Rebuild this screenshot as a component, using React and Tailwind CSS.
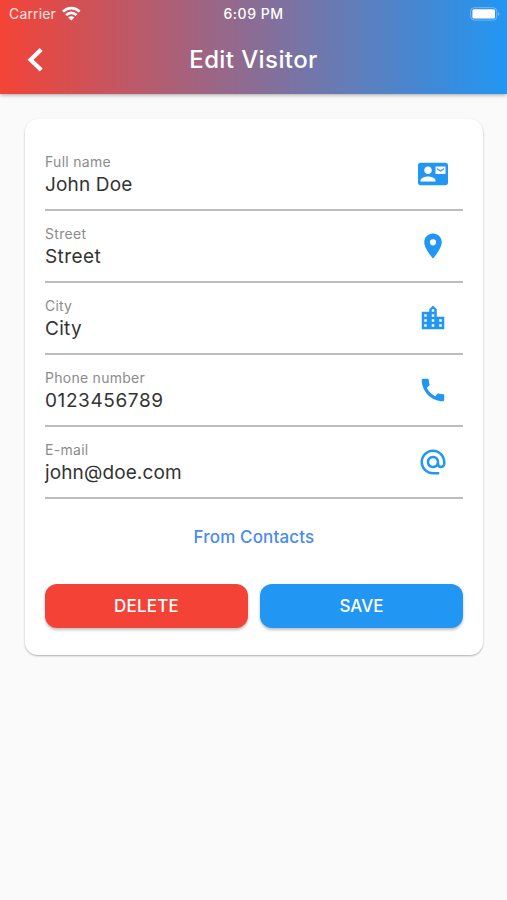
import React from 'react';
import { MdAlternateEmail, MdCall, MdLocationCity, MdLocationOn } from 'react-icons/md';

const ContactMail = ({ size, className }) => (
  <svg width={size} height={size} viewBox="0 0 24 24" fill="currentColor" className={className}>
    <path
      fillRule="evenodd"
      d="M22 3H2C.9 3 0 3.9 0 5v14c0 1.100.9 2 2 2h20c1.100 0 2-.9 2-2V5c0-1.100-.9-2-2-2zM8 6c1.660 0 3 1.340 3 3s-1.340 3-3 3-3-1.340-3-3 1.340-3 3-3zm6 12H2v-1c0-2 4-3.100 6-3.100s6 1.100 6 3.100zm8-6h-8V6h8z"
    />
    <path d="M20.900 8.200V7.200l-2.900 1.700-2.900-1.700v1l2.900 1.900z" />
  </svg>
);

const fields = [
  { label: 'Full name', value: 'John Doe', icon: ContactMail, labelSpace: 'tracking-[0.3px]', valueSpace: 'tracking-[0.15px]' },
  { label: 'Street', value: 'Street', icon: MdLocationOn, labelSpace: 'tracking-[0.3px]', valueSpace: 'tracking-[0.4px]' },
  { label: 'City', value: 'City', icon: MdLocationCity, labelSpace: 'tracking-[0.2px]', valueSpace: 'tracking-[0.3px]' },
  { label: 'Phone number', value: '0123456789', icon: MdCall, labelSpace: 'tracking-[0.27px]', valueSpace: 'tracking-[0.6px]' },
  { label: 'E-mail', value: 'john@doe.com', icon: MdAlternateEmail, labelSpace: 'tracking-[0.3px]', valueSpace: 'tracking-[0.12px]' },
];

const StatusBar = () => (
  <div className="grid grid-cols-3 items-center h-[27px] px-[9px] text-[14px] leading-none">
    <div className="flex items-center gap-[6px]">
      <span className="tracking-[0.15px] text-white/85">Carrier</span>
      <svg width="19" height="15" viewBox="0 0 19 15" fill="none" stroke="white" strokeWidth="2.7">
        <path d="M1 5.6C5.700.9 12.900.9 17.600 5.600" />
        <path d="M4.100 9.100c3-2.900 7.400-2.900 10.400 0" />
        <path d="M9.300 14.600 6.200 11.500c1.700-1.600 4.500-1.600 6.200 0z" fill="white" stroke="none" />
      </svg>
    </div>
    <span className="text-center font-medium tracking-[0.5px] whitespace-nowrap">6:09 PM</span>
    <svg className="justify-self-end mr-[-2px]" width="30" height="14" viewBox="0 0 30 14">
      <rect x="0.7" y="0.7" width="26" height="12.4" rx="3.6" fill="none" stroke="white" strokeOpacity="0.35" />
      <rect x="2.4" y="2.2" width="22.6" height="9.4" rx="1.6" fill="white" />
      <path d="M28 4.8c1.8.8 1.8 3.400 0 4.200z" fill="white" fillOpacity="0.4" />
    </svg>
  </div>
);

const Field = ({ item }) => {
  const Icon = item.icon;
  return (
    <div className="flex justify-between h-[72px] border-b-2 border-[#bdbdbd]">
      <div className="flex flex-col pt-[13px]">
        <label className={`text-[14px] leading-[19px] text-[#8c8c8c] ${item.labelSpace}`}>{item.label}</label>
        <span className={`mt-[1px] text-[19px] leading-[26px] text-[#333333] ${item.valueSpace}`}>{item.value}</span>
      </div>
      <Icon size={30} className="mt-[20px] mr-[14.800px] text-[#2196f3]" />
    </div>
  );
};

const App = () => {
  return (
    <div className="min-h-screen bg-[#fafafa] font-['Inter','Liberation_Sans',sans-serif]">
      {/* Header */}
      <header className="h-[94px] text-white bg-[linear-gradient(to_right,#f44336,#2196f3)] shadow-[0_1px_4px_rgba(0,0,0,0.35)]">
        <StatusBar />
        <div className="grid grid-cols-[80px_1fr_80px] items-center h-[66px]">
          <button className="pl-[27px]">
            <svg width="17" height="25" viewBox="0 0 17 25" fill="none" stroke="white" strokeWidth="4.2">
              <path d="M14.200 1.500 3.600 11.700 14.200 21.900" />
            </svg>
          </button>
          <h1 className="text-center text-[24px] font-medium tracking-[0.4px]">Edit Visitor</h1>
        </div>
      </header>

      {/* Visitor form */}
      <main className="mt-[25px] ml-[25px] mr-[24px] h-[536px] px-5 pt-5 rounded-[13px] bg-white shadow-[0_1px_2px_rgba(0,0,0,0.3)]">
        {fields.map((item) => (
          <Field key={item.label} item={item} />
        ))}
        <button className="block mx-auto mt-[26px] h-6 text-[17px] leading-6 font-medium tracking-[0.15px] text-[#4a8af4]">
          From Contacts
        </button>
        <div className="flex gap-3 mt-[35px]">
          <button className="flex-1 h-[44px] pt-px rounded-[12px] bg-[#f44336] text-white text-[17px] font-medium tracking-[0.2px] shadow-[0_2px_3px_rgba(0,0,0,0.25)]">
            DELETE
          </button>
          <button className="flex-1 h-[44px] pt-px rounded-[12px] bg-[#2196f3] text-white text-[17px] font-medium shadow-[0_2px_3px_rgba(0,0,0,0.25)]">
            SAVE
          </button>
        </div>
      </main>
    </div>
  );
};

export default App;
